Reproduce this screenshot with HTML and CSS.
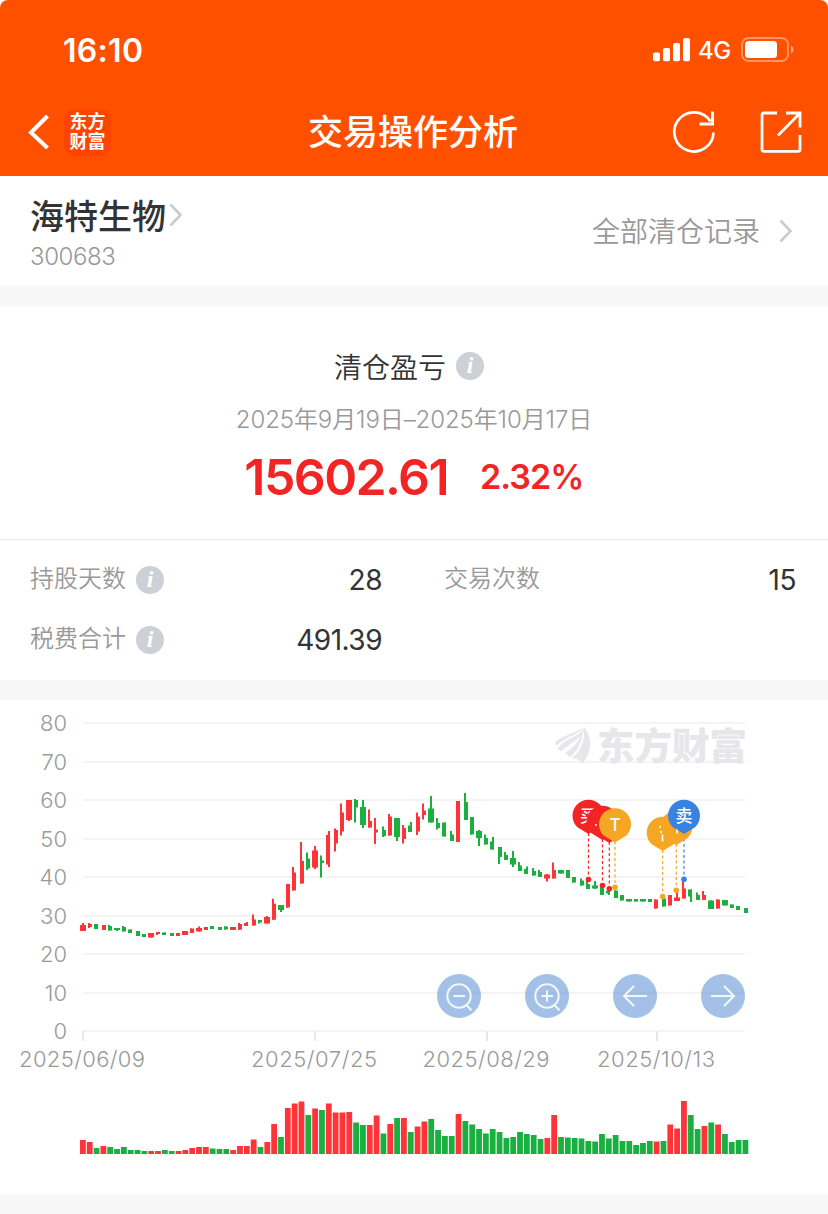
FILE: index.html
```
<!DOCTYPE html>
<html lang="zh-CN">
<head>
  <meta charset="UTF-8">
  <title>交易操作分析</title>
  <link rel="stylesheet" href="styles.css">
</head>
<body>
<div class="header">
  <div class="status-bar">
    <span class="time">16:10</span>
    <div class="status-icons">
      <svg width="38" height="24" viewBox="0 0 38 24" fill="#fff">
        <rect x="0" y="14.5" width="7" height="8.7" rx="1.8"/>
        <rect x="10" y="10" width="7" height="13.2" rx="1.8"/>
        <rect x="20" y="5" width="7" height="18.2" rx="1.8"/>
        <rect x="30" y="0" width="7" height="23.2" rx="1.8"/>
      </svg>
      <span class="network">4G</span>
      <svg width="54" height="26" viewBox="0 0 54 26">
        <rect x="1" y="1" width="46" height="23" rx="6.5" fill="none" stroke="#fff" stroke-opacity=".4" stroke-width="2"/>
        <rect x="4" y="4" width="32" height="17" rx="3.5" fill="#fff"/>
        <path d="M50 8.5c3.2 1.5 3.2 6.5 0 8z" fill="#fff" fill-opacity=".5"/>
      </svg>
    </div>
  </div>
  <div class="nav-bar">
    <div class="nav-left">
      <svg width="22" height="36" viewBox="0 0 22 36" fill="none" stroke="#fff" stroke-width="4">
        <path d="M19.5 2L3 18.5L19.5 34"/>
      </svg>
      <div class="app-logo"><span>东方</span><span>财富</span></div>
    </div>
    <h1>交易操作分析</h1>
    <div class="nav-right">
      <svg width="44" height="44" viewBox="0 0 44 44" fill="none" stroke="#fff" stroke-width="2.7">
        <path d="M41.5 22.5A19.6 19.6 0 1 1 38.500 11.5"/>
        <path d="M40.500 1.5V14H27.5" stroke-width="3"/>
      </svg>
      <svg width="42" height="42" viewBox="0 0 42 42" fill="none" stroke="#fff" stroke-width="2.8">
        <path d="M17 2H4Q2 2 2 4V38.5Q2 40.3 4 40.3H38Q40 40.3 40 38.5V24"/>
        <path d="M26 2H40V16.5M39.5 2.5L18 24.5"/>
      </svg>
    </div>
  </div>
</div>

<div class="stock">
  <div>
    <div class="stock-name">海特生物
      <svg width="14" height="24" viewBox="0 0 14 24" fill="none" stroke="#c9cbcf" stroke-width="2.6"><path d="M1.5 1.5L11.5 12L1.5 22.5"/></svg>
    </div>
    <div class="stock-code">300683</div>
  </div>
  <div class="records">
    <span>全部清仓记录</span>
    <svg width="14" height="24" viewBox="0 0 14 24" fill="none" stroke="#c9cbcf" stroke-width="2.6"><path d="M1.5 1.5L11.5 12L1.5 22.5"/></svg>
  </div>
</div>

<div class="summary">
  <div class="summary-title">清仓盈亏 <i class="info">i</i></div>
  <div class="summary-date">2025年9月19日–2025年10月17日</div>
  <div class="profit">
    <span class="amount">15602.61</span>
    <span class="rate">2.32%</span>
  </div>
</div>

<div class="stats">
  <div class="stat"><span class="label">持股天数</span><i class="info">i</i><span class="value">28</span></div>
  <div class="stat"><span class="label">交易次数</span><span class="value">15</span></div>
  <div class="stat"><span class="label">税费合计</span><i class="info">i</i><span class="value">491.39</span></div>
</div>

<div class="chart">
  <svg id="chart" width="828" height="494" viewBox="0 700 828 494">
    <g id="grid"></g>
    <g class="watermark">
      <path d="M555 743C560 736 573 734 585 727C577 735 564 738 556 746Z"/>
      <path d="M557 749C564 739 578 737 585 728C582 739 569 744 561 751Z"/>
      <path d="M565 753C575 747 581 739 583 727C583 742 577 752 570 757Z"/>
      <path d="M572 758C581 751 585 741 584 727C593 738 592 752 582 764Q580 759 572 758Z"/>
      <text x="597" y="759.5" textLength="150" lengthAdjust="spacingAndGlyphs">东方财富</text>
    </g>
    <g id="candles"></g>
    <g id="pins"></g>
    <g id="volume"></g>
  </svg>
  <div class="tools">
    <button><svg viewBox="0 0 44 44"><circle cx="22" cy="22" r="11.7"/><path d="M16.5 22H28M30 31.5L34.5 36.5"/></svg></button>
    <button><svg viewBox="0 0 44 44"><circle cx="22" cy="22" r="11.7"/><path d="M16.5 22H28M22 16.2V27.8M30 31.5L34.5 36.5"/></svg></button>
    <button><svg viewBox="0 0 44 44"><path d="M34 22H11.5M21 12L11 22L21 32"/></svg></button>
    <button><svg viewBox="0 0 44 44"><path d="M10 22H32.5M23 12L33 22L23 32"/></svg></button>
  </div>
</div>

<script src="chart.js"></script>
</body>
</html>
```
FILE: styles.css
```
body {
  margin: 0;
  background-color: #fff;
  color: #333;
  font-family: Inter, "Noto Sans CJK SC", sans-serif;
}

svg {
  display: block;
}

.header {
  height: 176px;
  background-color: #ff5000;
  color: #fff;
  border-radius: 8px 8px 0 0;
}

.status-bar {
  display: flex;
  justify-content: space-between;
  align-items: center;
  height: 88px;
  box-sizing: border-box;
  padding: 12px 33px 0 63px;
}

.time {
  font-size: 32px;
  font-weight: 600;
  letter-spacing: 0.3px;
}

.status-icons {
  display: flex;
  align-items: center;
}

.network {
  width: 33px;
  margin: 1px 10px 0 7px;
  font-size: 24px;
  font-weight: 500;
  letter-spacing: -0.5px;
}

.nav-bar {
  display: grid;
  grid-template-columns: 1fr auto 1fr;
  align-items: center;
  height: 88px;
  padding: 0 26px 0 28px;
}

.nav-bar h1 {
  margin: 0 2px 0 -2px;
  font-size: 35px;
  line-height: 88px;
  font-weight: 500;
}

.nav-left,
.nav-right {
  display: flex;
  align-items: center;
}

.nav-left {
  gap: 14px;
}

.nav-right {
  justify-content: flex-end;
  gap: 44px;
}

.app-logo {
  display: flex;
  flex-direction: column;
  justify-content: center;
  width: 47px;
  height: 47px;
  border-radius: 10px;
  background-color: #ff4400;
  font-size: 18px;
  font-weight: 700;
  line-height: 20px;
  text-align: center;
}

.stock {
  display: flex;
  justify-content: space-between;
  align-items: center;
  height: 110px;
  padding: 0 35px 0 30px;
  border-bottom: 20px solid #f7f7f7;
}

.stock-name {
  display: flex;
  gap: 4px;
  padding-top: 3px;
  font-size: 34px;
  line-height: 46px;
  font-weight: 500;
}

.stock-name svg {
  margin: 9px 0 0 -1px;
}

.stock-code {
  margin-top: 2px;
  font-size: 24px;
  line-height: 30px;
  font-weight: 350;
  letter-spacing: -0.4px;
  color: #999;
}

.records {
  display: flex;
  align-items: center;
  gap: 19px;
  font-size: 28px;
  font-weight: 350;
  color: #999;
}

.records span {
  margin-top: -3px;
}

.info {
  display: inline-flex;
  justify-content: center;
  width: 28px;
  height: 28px;
  border-radius: 50%;
  background-color: #cdd0d6;
  color: #fff;
  font: italic bold 24px/27px "Liberation Serif", serif;
}

.summary {
  height: 233px;
  border-bottom: 1px solid #e8e8e8;
  text-align: center;
}

.summary-title {
  display: flex;
  justify-content: center;
  align-items: center;
  gap: 10px;
  height: 40px;
  padding: 40px 10px 0 0;
  font-size: 28px;
  font-weight: 350;
}

.summary-date {
  margin-top: 19px;
  font-size: 24px;
  line-height: 30px;
  font-weight: 350;
  letter-spacing: -0.1px;
  color: #999;
}

.profit {
  display: flex;
  justify-content: center;
  align-items: center;
  gap: 32px;
  margin-top: 12px;
  color: #f32424;
  line-height: 60px;
}

.amount {
  font-size: 50px;
  font-weight: 600;
  letter-spacing: -1.6px;
}

.rate {
  font-size: 34px;
  font-weight: 600;
  letter-spacing: -0.9px;
}

.stats {
  display: grid;
  grid-template-columns: 352px 352px;
  column-gap: 62px;
  height: 130px;
  padding: 10px 30px 0;
  grid-auto-rows: 60px;
  border-bottom: 20px solid #f7f7f7;
}

.stat {
  display: flex;
  align-items: center;
}

.label {
  margin: -8px 10px 0 0;
  font-size: 24px;
  font-weight: 350;
  color: #999;
}

.value {
  margin-left: auto;
  font-size: 28px;
  letter-spacing: -0.5px;
}

.chart {
  position: relative;
  border-bottom: 20px solid #f7f7f7;
}

.axis {
  font-size: 22px;
  font-weight: 350;
  fill: #999;
}

.watermark {
  fill: #e6e6eb;
  font-size: 37px;
  font-weight: 900;
}

.pin-text {
  fill: #fff;
  font-size: 17px;
  font-weight: 500;
  text-anchor: middle;
}

.tools {
  position: absolute;
  top: 274px;
  left: 437px;
  display: flex;
  gap: 44px;
}

.tools button {
  width: 44px;
  height: 44px;
  padding: 0;
  border: none;
  border-radius: 50%;
  background-color: rgba(72, 132, 207, 0.5);
}

.tools svg {
  fill: none;
  stroke: #f2f7fd;
  stroke-width: 2;
}
```
FILE: chart.js
```
const RED = '#ff3338';
const GREEN = '#19b040';
const START = 80;
const STEP = 6.83;

// [bodyTop, bodyBottom, wickTop, wickBottom]
const candles = [
  [925,931,923,931],[924,927,923,928],[924,929],[925,930],[926,930.5,925],[928,930,928,931],[927,931.5,926],[929.5,933],[931,936],[934,937],
  [933,937.5],[932,934,932,935],[932.5,935],[933,936],[933,936],[931,935],[928.5,933],[928,931.5,926.5],[927,930],[926,929],
  [927,930],[926.5,929.5],[927,930],[924,929.7,923],[923,926,922],[919.5,925.5,914.5],[920,922.5,920,923.5],[917,923.5,916],[903.7,919.7,898.7],[905,910,905,912],
  [884,907.5],[872.5,890.5,867],[861,883.5,842],[858.5,868.5,852.5,870],[850.5,867.5,846,869],[860.5,863,855.5,877.5],[835,864.5,831,867],[830,843.5,828.5,851.5],[812.5,831.5,803.5,835.5],[800,820,800,821],
  [800,807.5,799,822.5],[807,825,800,828],[821,827.5,809.5],[829.5,832.5,818,844],[830,836,826.5,837],[816.5,835.5,814],[818,837,818,841],[828,839,825,843.5],[825.5,832,822],[816.5,831.5,812.5,835],
  [810.5,815,803.5,819.5],[808.5,822.5,796],[823,828,818,829.5],[822.5,836.5],[834.5,841,831],[801,842],[802,820,793],[817,834.5],[831,838,830,846],[838,844.5,834.5],
  [841.5,849.5,837],[847,857,847,864],[855,860,852],[858,864.5,851,867],[865.5,871,862],[869,874,866.5],[871,875.5,868],[872,877,870],[874.5,878.5,874,881.5],[870,878.5,862.5],
  [870,873.5],[870,878],[877,882.5],[880.5,885.5,878.5],[884,889,881],[885.5,888.5,881,889],[887,895],[891,893.5,891,895],[890.5,898],[895,900.5],
  [899,901.5],[899,901.5],[899,901.5],[899,902],[899.5,908.5],[898.5,906.5],[895,905.5],[897.5,901,892],[888.5,898.5,881],[889.5,896.5,889.5,902],
  [895,900,892.5],[895,900,891],[900.5,909],[899.5,908.5],[900,905.5],[904.5,908],[906,910],[908,913]
];

const volumes = [14,12,6,8,7,5,7,4,4,3,3,3,4,3,3,4,6,7,7,5.5,5,5,4,8,8,14.5,7,12,30,17,46,50.5,52.5,39,45.5,44,50.5,41.5,41.5,42,
  31.5,29,29,38.5,20.5,30,36,36,22,27.5,32.5,35,24,18,18,40,33,29.5,25,20.5,25,22,16,17,22,20,19,15,16,39,17,16.5,16,15.5,13,12.5,20,15.5,19,13,
  13,9,11,13,12.5,13,29.5,25.5,53,39,25,28,31.5,29.5,20,12,14,14];

const colors = 'rrgrggggggrrggrrrrrgggrrrrgrrgrrrgrgrrrrggrrgrgrgrrggggr' + 'g'.repeat(12) + 'rr' + 'g'.repeat(14) + 'rgrrrggrgrgggg';

function rect(x, y, w, h, fill) {
  return `<rect x="${x}" y="${y}" width="${w}" height="${h}" fill="${fill}"/>`;
}

function drawGrid() {
  let out = '';
  for (let i = 0; i <= 8; i++) {
    const y = 723 + i * 38.56;
    out += rect(83, Math.round(y) - 1, 662, 2, '#f4f4f4');
    out += `<text class="axis" x="67" y="${y + 8}" text-anchor="end">${80 - i * 10}</text>`;
  }
  [['2025/06/09', 83, 126], ['2025/07/25', 315, 126], ['2025/08/29', 487, 127], ['2025/10/13', 657, 118]].forEach(([date, x, width]) => {
    out += rect(x - 1, 1031, 2, 10, '#e8e8e8');
    out += `<text class="axis" x="${x - 1 - width / 2}" y="1067" textLength="${width}">${date}</text>`;
  });
  document.getElementById('grid').innerHTML = out;
}

function drawCandles() {
  let out = '';
  candles.forEach(([top, bottom, high = top, low = bottom], i) => {
    const x = START + STEP * i;
    const left = 2 * Math.ceil((x - 0.45) / 2);
    const right = 2 * Math.round((x + 5) / 2);
    const wick = right - left > 4 ? left + 2 : 2 * Math.floor((x + 2.2) / 2);
    const color = colors[i] === 'r' ? RED : GREEN;
    out += rect(left, top, right - left, bottom - top, color);
    out += rect(wick, high, 2, low - high, color);
  });
  document.getElementById('candles').innerHTML = out;
}

function drawVolume() {
  let out = '';
  volumes.forEach((v, i) => {
    out += rect((START + STEP * i).toFixed(2), 1154 - v, 5.8, v, colors[i] === 'r' ? RED : GREEN);
  });
  document.getElementById('volume').innerHTML = out;
}

// x, centre of the bubble, y of the dot, colour, text
const pins = [
  [588.5, 816, 879.5, '#f32424', '买'],
  [602.5, 822, 885.5, '#f32424', ''],
  [609.3, 825, 888.7, '#f32424', ''],
  [615, 824.5, 887.3, '#f5a623', 'T'],
  [676.3, 827, 890.3, '#f5a623', ''],
  [662.7, 833, 896.5, '#f5a623', ''],
  [684, 816, 879.2, '#3a82e0', '卖']
];

function drawPins() {
  let out = '';
  pins.forEach(([x, y, dot, color]) => {
    out += `<path d="M${x} ${y + 17}V${dot}" stroke="${color}" stroke-width="1.2" stroke-dasharray="3 2.5"/>`;
    out += `<circle cx="${x}" cy="${dot}" r="2.8" fill="${color}"/>`;
  });
  pins.forEach(([x, y, dot, color, text]) => {
    out += `<path d="M${x} ${y + 18}L${x - 11} ${y + 11.3}A16 16 0 1 1 ${x + 11} ${y + 11.3}Z" fill="${color}"/>`;
    out += `<text class="pin-text" x="${x}" y="${y + 6}">${text}</text>`;
  });
  out += '<path d="M595 825h2M659 827h2M661 831v2M662.5 834.5v7M677 829.5v4" stroke="#fff" stroke-width="1.6"/>';
  document.getElementById('pins').innerHTML = out;
}

drawGrid();
drawCandles();
drawVolume();
drawPins();
```
